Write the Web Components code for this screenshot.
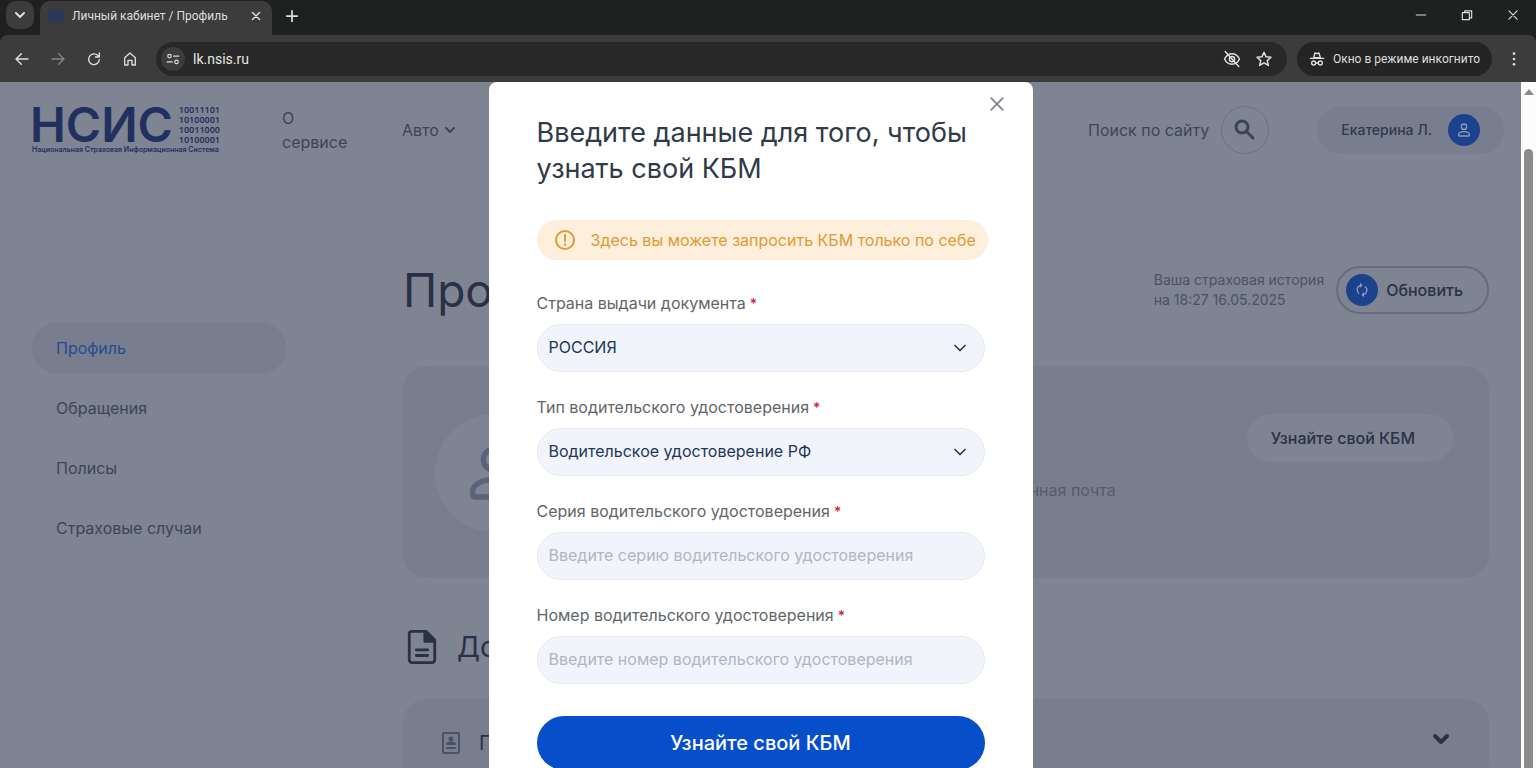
<!DOCTYPE html>
<html lang="ru">
<head>
<meta charset="utf-8">
<meta name="viewport" content="width=device-width, initial-scale=1">
<title>Личный кабинет / Профиль</title>
<style>
    * { box-sizing: border-box; }
    body {
        margin: 0;
        height: 100vh;
        display: flex;
        flex-direction: column;
        overflow: hidden;
        font-family: Inter, "Liberation Sans", sans-serif;
        font-size: 16px;
        line-height: 24px;
    }
    .viewport { flex: 1; min-height: 0; display: flex; }
    .page {
        flex: 1;
        min-width: 0;
        position: relative;
        overflow: hidden;
        background: #7e8491;
        color: #3c4458;
    }
    .columns {
        display: grid;
        grid-template-columns: 254px 1fr;
        gap: 117px;
        padding: 88px 32px 0;
    }
</style>
</head>
<body>
<browser-bar></browser-bar>
<div class="viewport">
    <div class="page">
        <site-header></site-header>
        <div class="columns">
            <side-menu></side-menu>
            <profile-page></profile-page>
        </div>
        <kbm-dialog>
            <span slot="title">Введите данные для того, чтобы узнать свой КБМ</span>
            <span slot="notice">Здесь вы можете запросить КБМ только по себе</span>
            <form-field label="Страна выдачи документа" value="РОССИЯ" type="select"></form-field>
            <form-field label="Тип водительского удостоверения" value="Водительское удостоверение РФ" type="select"></form-field>
            <form-field label="Серия водительского удостоверения" placeholder="Введите серию водительского удостоверения"></form-field>
            <form-field label="Номер водительского удостоверения" placeholder="Введите номер водительского удостоверения"></form-field>
        </kbm-dialog>
    </div>
    <scroll-track></scroll-track>
</div>

<script>
const ICONS = {
    chevron: '<path d="M6 9l6 6 6-6"/>',
    close: '<path d="M5 5l14 14M19 5L5 19"/>',
    plus: '<path d="M12 3v18M3 12h18"/>',
    minimize: '<path d="M4 12h16"/>',
    restore: '<path d="M4 8h12v12H4zM8 8V5h12v12h-4"/>',
    back: '<path d="M21 12H4M11 4l-8 8 8 8"/>',
    forward: '<path d="M3 12h17M13 4l8 8-8 8"/>',
    reload: '<path d="M20 13a8 8 0 1 1-2.500-6.500L20 9M20 3v6h-6"/>',
    home: '<path d="M4 10l8-7 8 7v11h-5v-7H9v7H4z"/>',
    tune: '<circle cx="6" cy="7" r="3"/><path d="M13 7h9M2 17h9"/><circle cx="18" cy="17" r="3"/>',
    eye: '<path d="M2 12c2-4 6-7 10-7s8 3 10 7c-2 4-6 7-10 7s-8-3-10-7z"/><circle cx="12" cy="12" r="3.500"/><path d="M3 2l18 20"/>',
    star: '<path d="M12 3l2.700 6.100 6.600.600-5 4.400 1.500 6.500L12 17.200l-5.800 3.400 1.500-6.500-5-4.400 6.600-.600z"/>',
    incognito: '<path d="M7 10l2-7 3 1 3-1 2 7z"/><path d="M2 11h20"/><circle cx="7" cy="18" r="3"/><circle cx="17" cy="18" r="3"/><path d="M10 18h4"/>',
    dots: '<g fill="currentColor" stroke="none"><circle cx="12" cy="4" r="2"/><circle cx="12" cy="12" r="2"/><circle cx="12" cy="20" r="2"/></g>',
    search: '<circle cx="9" cy="9" r="6"/><path d="M13.500 13.500L20 20"/>',
    person: '<circle cx="12" cy="7" r="4"/><path d="M4 20v-1c0-3 4-4.500 8-4.500s8 1.500 8 4.500v1q0 1-1 1H5q-1 0-1-1z"/>',
    refresh: '<path d="M10 5a7 7 0 0 0-3 12M14 19a7 7 0 0 0 3-12"/><path d="M9 1l4 4-4 4zM15 15l-4 4 4 4z" fill="currentColor" stroke="none"/>',
    warning: '<circle cx="12" cy="12" r="9"/><path d="M12 7v6M12 16v1"/>',
    document: '<path d="M4 1h11l6 6v14a2 2 0 0 1-2 2H5a2 2 0 0 1-2-2V2z"/><path d="M14 1v7h7z" fill="currentColor"/><path d="M8 14h8M8 18h8"/>',
    badge: '<rect x="4" y="2" width="16" height="20" rx="1"/><circle cx="12" cy="8" r="1.500" fill="currentColor"/><path d="M8 13c1-2 7-2 8 0zM8 17h8" fill="currentColor"/>'
};

class UiIcon extends HTMLElement {
    connectedCallback() {
        this.attachShadow({ mode: 'open' }).innerHTML = `
            <style>
                :host { display: inline-flex; flex: none; width: var(--size, 16px); height: var(--size, 16px); }
                svg { width: 100%; height: 100%; fill: none; stroke: currentColor; stroke-width: var(--stroke, 2); }
            </style>
            <svg viewBox="0 0 24 24" stroke-linecap="round" stroke-linejoin="round" aria-hidden="true">${ICONS[this.getAttribute('name')]}</svg>
        `;
    }
}

class BrowserBar extends HTMLElement {
    connectedCallback() {
        this.attachShadow({ mode: 'open' }).innerHTML = `
            <style>
                * { box-sizing: border-box; }
                :host {
                    display: block;
                    flex: none;
                    background: #1f2120;
                    color: #dedede;
                    font-family: Roboto, "Noto Sans", sans-serif;
                    font-size: 12px;
                    line-height: 20px;
                }
                button { display: flex; align-items: center; justify-content: center; padding: 0; border: 0; background: none; color: inherit; font: inherit; }
                .tabs { display: flex; align-items: center; height: 35px; padding: 0 16px 0 6px; }
                .list { width: 28px; height: 28px; margin-bottom: 6px; border-radius: 10px; background: #3c3c3c; --stroke: 3; }
                .tab {
                    display: flex;
                    align-items: center;
                    gap: 8px;
                    align-self: flex-end;
                    width: 232px;
                    height: 34px;
                    margin-left: 6px;
                    padding: 0 8px 4px;
                    border-radius: 10px 10px 0 0;
                    background: #3c3c3c;
                }
                .favicon { width: 16px; height: 14px; border-radius: 2px; background: #2d3855; }
                .tab span { flex: 1; white-space: nowrap; }
                .tab button { width: 16px; height: 16px; --size: 12px; --stroke: 3; }
                .new { margin: 0 auto 4px 13px; --size: 14px; --stroke: 3; }
                .window { display: flex; gap: 32px; margin-bottom: 6px; --size: 14px; }
                .toolbar { display: flex; align-items: center; height: 47px; padding: 0 14px; background: #3c3c3c; border-radius: 8px 8px 0 0; }
                .nav { display: flex; gap: 20px; --size: 16px; }
                .nav .off { color: #858585; }
                .address {
                    flex: 1;
                    display: flex;
                    align-items: center;
                    gap: 8px;
                    height: 34px;
                    margin: 0 10px 0 18px;
                    padding: 0 11px 0 5px;
                    border-radius: 17px;
                    background: #282828;
                }
                .site { width: 24px; height: 24px; border-radius: 12px; background: #3c3c3c; --size: 14px; }
                input { flex: 1; min-width: 0; padding: 0; border: 0; outline: 0; background: none; color: #e6e6e6; font: inherit; font-size: 14px; }
                .address .tool { width: 24px; --size: 18px; }
                .incognito { gap: 8px; height: 34px; padding: 0 12px; border-radius: 17px; background: #242424; white-space: nowrap; }
                .menu { margin-left: 14px; }
            </style>
            <div class="tabs">
                <button class="list" aria-label="Поиск вкладок"><ui-icon name="chevron"></ui-icon></button>
                <div class="tab">
                    <i class="favicon"></i>
                    <span>Личный кабинет / Профиль</span>
                    <button aria-label="Закрыть вкладку"><ui-icon name="close"></ui-icon></button>
                </div>
                <button class="new" aria-label="Новая вкладка"><ui-icon name="plus"></ui-icon></button>
                <div class="window">
                    <button aria-label="Свернуть"><ui-icon name="minimize"></ui-icon></button>
                    <button aria-label="Восстановить"><ui-icon name="restore"></ui-icon></button>
                    <button aria-label="Закрыть"><ui-icon name="close"></ui-icon></button>
                </div>
            </div>
            <div class="toolbar">
                <div class="nav">
                    <button aria-label="Назад"><ui-icon name="back"></ui-icon></button>
                    <button class="off" aria-label="Вперёд"><ui-icon name="forward"></ui-icon></button>
                    <button aria-label="Обновить страницу"><ui-icon name="reload"></ui-icon></button>
                    <button aria-label="Главная"><ui-icon name="home"></ui-icon></button>
                </div>
                <div class="address">
                    <button class="site" aria-label="Сведения о сайте"><ui-icon name="tune"></ui-icon></button>
                    <input type="text" value="lk.nsis.ru" aria-label="Адресная строка">
                    <button class="tool" aria-label="Файлы cookie"><ui-icon name="eye"></ui-icon></button>
                    <button class="tool" aria-label="В закладки"><ui-icon name="star"></ui-icon></button>
                </div>
                <button class="incognito"><ui-icon name="incognito"></ui-icon>Окно в режиме инкогнито</button>
                <button class="menu" aria-label="Меню"><ui-icon name="dots"></ui-icon></button>
            </div>
        `;
    }
}

class SiteHeader extends HTMLElement {
    connectedCallback() {
        this.attachShadow({ mode: 'open' }).innerHTML = `
            <style>
                * { box-sizing: border-box; }
                :host { display: flex; align-items: center; height: 96px; padding: 0 17px 0 32px; }
                a { color: inherit; text-decoration: none; }
                button { display: flex; align-items: center; justify-content: center; border: 0; background: none; color: inherit; font: inherit; }
                .logo { width: 188px; color: #22305f; font-weight: 600; }
                .mark { display: flex; justify-content: space-between; align-items: center; }
                .name { font-size: 48px; line-height: 40px; margin-left: -2px; }
                .bits { font: 600 9px/10px "Noto Sans", sans-serif; }
                .tagline { display: block; font-size: 7px; line-height: 10px; white-space: nowrap; }
                nav { display: flex; align-items: center; gap: 48px; margin: 0 auto 0 62px; }
                nav a:first-child { width: 72px; }
                nav a:last-child { display: flex; align-items: center; gap: 3px; --size: 16px; --stroke: 3; }
                .search { display: flex; align-items: center; gap: 12px; }
                .search button { width: 48px; height: 48px; padding: 0; border: 1px solid #6c7280; border-radius: 24px; --size: 24px; --stroke: 3; }
                .user { gap: 16px; height: 48px; margin-left: 48px; padding: 0 24px; border-radius: 24px; background: #787e8e; color: #30384d; font-size: 14px; font-weight: 500; }
                .avatar { display: flex; align-items: center; justify-content: center; width: 32px; height: 32px; border-radius: 16px; background: #1c428e; color: #8e9bb5; }
            </style>
            <a class="logo" href="#">
                <span class="mark">
                    <span class="name">НСИС</span>
                    <span class="bits">10011101<br>10100001<br>10011000<br>10100001</span>
                </span>
                <span class="tagline">Национальная Страховая Информационная Система</span>
            </a>
            <nav>
                <a href="#">О сервисе</a>
                <a href="#">Авто <ui-icon name="chevron"></ui-icon></a>
            </nav>
            <div class="search">
                <span>Поиск по сайту</span>
                <button aria-label="Поиск"><ui-icon name="search"></ui-icon></button>
            </div>
            <button class="user">Екатерина Л.<span class="avatar"><ui-icon name="person"></ui-icon></span></button>
        `;
    }
}

class SideMenu extends HTMLElement {
    connectedCallback() {
        this.attachShadow({ mode: 'open' }).innerHTML = `
            <style>
                :host { display: block; padding-top: 56px; }
                nav { display: flex; flex-direction: column; gap: 8px; }
                a { padding: 14px 24px; border-radius: 26px; color: inherit; text-decoration: none; }
                .active { background: #787e8e; color: #264b8f; }
            </style>
            <nav>
                <a class="active" href="#">Профиль</a>
                <a href="#">Обращения</a>
                <a href="#">Полисы</a>
                <a href="#">Страховые случаи</a>
            </nav>
        `;
    }
}

class ProfilePage extends HTMLElement {
    connectedCallback() {
        this.attachShadow({ mode: 'open' }).innerHTML = `
            <style>
                * { box-sizing: border-box; }
                :host { display: block; min-width: 0; color: #2a3147; }
                h1, h2, h3, p { margin: 0; font-weight: 400; }
                button { display: flex; align-items: center; border: 0; border-radius: 24px; height: 48px; color: inherit; font: inherit; font-weight: 500; }
                .top { display: flex; align-items: center; height: 48px; margin-bottom: 52px; }
                h1 { flex: 1; font-size: 46px; line-height: 48px; }
                .top p { margin-right: 12px; font-size: 14px; line-height: 20px; color: #4b5265; }
                .refresh { gap: 8px; padding: 0 24px 0 8px; border: 2px solid #666c82; background: none; }
                .refresh i { display: flex; align-items: center; justify-content: center; width: 32px; height: 32px; border-radius: 16px; background: #1c428e; color: #8e9bb5; }
                .card { display: flex; border-radius: 24px; background: #787e8e; }
                .profile { align-items: flex-start; height: 212px; padding: 48px 36px 0 32px; }
                .photo { display: flex; align-items: center; justify-content: center; width: 118px; height: 118px; border-radius: 50%; background: #7e8491; color: #5b6279; --size: 64px; }
                .person { flex: 1; display: flex; flex-direction: column; align-items: flex-end; gap: 48px; padding-right: 131px; }
                .name { padding-right: 82px; font-size: 20px; line-height: 16px; }
                .mail { color: #555c6f; }
                .kbm { padding: 0 38px 0 24px; background: #7e8491; }
                .section { display: flex; align-items: center; gap: 18px; margin: 52px 0 35px 2px; --size: 34px; }
                h2 { font-size: 28px; line-height: 34px; }
                .documents { align-items: center; gap: 16px; height: 88px; padding: 0 36px; }
                .documents ui-icon:first-child { --size: 24px; color: #4b5265; }
                .documents ui-icon:last-child { --size: 24px; --stroke: 4; margin-bottom: 8px; }
                h3 { flex: 1; font-size: 20px; }
            </style>
            <div class="top">
                <h1>Профиль</h1>
                <p>Ваша страховая история<br>на 18:27 16.05.2025</p>
                <button class="refresh"><i><ui-icon name="refresh"></ui-icon></i>Обновить</button>
            </div>
            <section class="card profile">
                <span class="photo"><ui-icon name="person"></ui-icon></span>
                <div class="person">
                    <p class="name">Екатерина</p>
                    <p class="mail">Электронная почта</p>
                </div>
                <button class="kbm">Узнайте свой КБМ</button>
            </section>
            <div class="section"><ui-icon name="document"></ui-icon><h2>Документы</h2></div>
            <section class="card documents">
                <ui-icon name="badge"></ui-icon>
                <h3>Паспорт</h3>
                <ui-icon name="chevron"></ui-icon>
            </section>
        `;
    }
}

class KbmDialog extends HTMLElement {
    connectedCallback() {
        this.attachShadow({ mode: 'open' }).innerHTML = `
            <style>
                * { box-sizing: border-box; }
                /* the dialog lies over the page and scrolls off its bottom edge */
                :host { position: absolute; inset: 0; display: flex; justify-content: center; align-items: flex-start; overflow: hidden; }
                .dialog { position: relative; width: 544px; max-width: 100%; padding: 33px 48px 48px; border-radius: 8px; background: #fff; }
                .close { position: absolute; top: 10px; right: 24px; width: 24px; height: 24px; padding: 2px; border: 0; background: none; color: #7c8088; --size: 20px; }
                h2 { margin: 0 0 33px; font-size: 27px; line-height: 36px; font-weight: 400; color: #303a48; }
                .notice {
                    display: inline-flex;
                    align-items: center;
                    gap: 14px;
                    height: 40px;
                    padding: 0 12px 0 16px;
                    border-radius: 20px;
                    background: #feefdd;
                    color: #e09a33;
                    white-space: nowrap;
                    --size: 24px;
                }
                form { display: flex; flex-direction: column; gap: 24px; margin-top: 32px; }
                .submit { height: 54px; margin-top: 8px; border: 0; border-radius: 27px; background: #074ecb; color: #fff; font: inherit; font-size: 20px; font-weight: 500; }
            </style>
            <div class="dialog" role="dialog" aria-modal="true" aria-labelledby="title">
                <button class="close" aria-label="Закрыть"><ui-icon name="close"></ui-icon></button>
                <h2 id="title"><slot name="title"></slot></h2>
                <div class="notice"><ui-icon name="warning"></ui-icon><slot name="notice"></slot></div>
                <form>
                    <slot></slot>
                    <button class="submit" type="button">Узнайте свой КБМ</button>
                </form>
            </div>
        `;
    }
}

class FormField extends HTMLElement {
    connectedCallback() {
        const value = this.getAttribute('value') || '';
        const isSelect = this.getAttribute('type') === 'select';
        const control = isSelect
            ? `<select id="control" required><option>${value}</option></select><ui-icon name="chevron"></ui-icon>`
            : `<input id="control" type="text" required placeholder="${this.getAttribute('placeholder')}">`;

        this.attachShadow({ mode: 'open' }).innerHTML = `
            <style>
                * { box-sizing: border-box; }
                :host { display: flex; flex-direction: column; gap: 10px; }
                label { line-height: 22px; color: #636669; }
                b { margin-left: 4px; color: #d0203c; font-size: 14px; font-weight: 500; line-height: 16px; }
                .box { display: grid; align-items: center; color: #233659; }
                .box > * { grid-area: 1 / 1; }
                select, input {
                    appearance: none;
                    width: 100%;
                    height: 48px;
                    padding: 0 11px 2px;
                    border: 1px solid #e6ebf2;
                    border-radius: 24px;
                    outline: 0;
                    background: #f1f4fa;
                    color: inherit;
                    font: inherit;
                }
                input::placeholder { color: #b0b6c3; }
                ui-icon { justify-self: end; margin-right: 15px; pointer-events: none; --size: 20px; }
            </style>
            <label for="control">${this.getAttribute('label')}<b>*</b></label>
            <div class="box">${control}</div>
        `;
    }
}

class ScrollTrack extends HTMLElement {
    connectedCallback() {
        this.attachShadow({ mode: 'open' }).innerHTML = `
            <style>
                :host { display: flex; flex-direction: column; align-items: center; width: 15px; background: #fcfcfc; }
                .up { margin: 7px 0 54px; border: 5px solid transparent; border-top: 0; border-bottom: 6px solid #8b8b8b; }
                .thumb { flex: 1; width: 9px; border-radius: 5px 5px 0 0; background: #8b8b8b; }
            </style>
            <div class="up"></div>
            <div class="thumb"></div>
        `;
    }
}

customElements.define('ui-icon', UiIcon);
customElements.define('browser-bar', BrowserBar);
customElements.define('site-header', SiteHeader);
customElements.define('side-menu', SideMenu);
customElements.define('profile-page', ProfilePage);
customElements.define('form-field', FormField);
customElements.define('kbm-dialog', KbmDialog);
customElements.define('scroll-track', ScrollTrack);
</script>
</body>
</html>
